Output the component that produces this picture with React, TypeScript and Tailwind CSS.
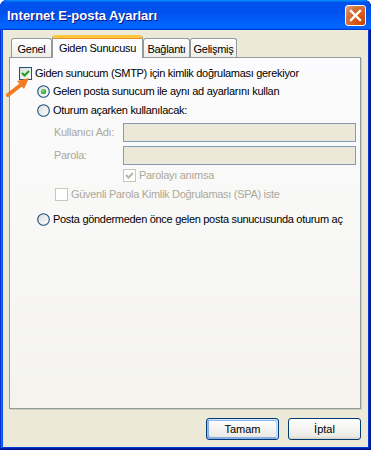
import React from "react";

const F = { fontFamily: '"Liberation Sans", Arial, sans-serif' };

function Check({ checked, disabled }: { checked?: boolean; disabled?: boolean }) {
  return (
    <div
      className={
        "w-[13px] h-[13px] shrink-0 border flex items-center justify-center " +
        (disabled
          ? "border-[#cac8bb] bg-white"
          : "border-[#1c5180] bg-[linear-gradient(135deg,#dcdcd7,#ffffff)]")
      }
    >
      {checked && (
        <svg width="11" height="11" viewBox="0 0 11 11">
          <polyline
            points="2,5 4.5,7.5 9,3"
            fill="none"
            stroke={disabled ? "#b8b6a8" : "#21a121"}
            strokeWidth="2.2"
          />
        </svg>
      )}
    </div>
  );
}

function Radio({ checked }: { checked?: boolean }) {
  return (
    <svg width="13" height="13" viewBox="0 0 13 13" className="shrink-0">
      <defs>
        <linearGradient id="rg" x1="0" y1="0" x2="1" y2="1">
          <stop offset="0" stopColor="#dcdcd7" />
          <stop offset="1" stopColor="#ffffff" />
        </linearGradient>
        <radialGradient id="dot" cx="0.4" cy="0.4" r="0.6">
          <stop offset="0" stopColor="#8ee08e" />
          <stop offset="1" stopColor="#1f9c1f" />
        </radialGradient>
      </defs>
      <circle cx="6.5" cy="6.5" r="5.8" fill="url(#rg)" stroke="#1c5180" strokeWidth="1.1" />
      {checked && <circle cx="6.5" cy="6.5" r="2.6" fill="url(#dot)" />}
    </svg>
  );
}

function Tab({ label, active, w }: { label: string; active?: boolean; w: string }) {
  if (active)
    return (
      <div className={"relative z-10 -mb-px h-[23px] pt-[4px] text-center border-x border-[#919b9c] border-t-[3px] border-t-[#ffc83c] rounded-t-[3px] shadow-[inset_0_1px_#e68b2c] bg-[#fcfcfe] text-[11px] leading-[13px] tracking-[-0.3px] text-black " + w}>
        {label}
      </div>
    );
  return (
    <div className={"h-[19px] pt-[4px] text-center border-x border-t border-[#919b9c] rounded-t-[3px] bg-[linear-gradient(180deg,#ffffff,#fafaf9_26%,#f0f0ea_95%,#ecebe6)] text-[11px] leading-[13px] tracking-[-0.3px] text-black " + w}>
      {label}
    </div>
  );
}

export default function App() {
  return (
    <div className="w-[371px] h-[450px] bg-white" style={F}>
      <div className="relative w-[371px] h-[450px] flex flex-col rounded-t-[7px] bg-[#0831d9] shadow-[inset_-1px_-1px_#00138c,inset_1px_1px_#0831d9,inset_-2px_-2px_#001ea0,inset_2px_2px_#166aee,inset_-3px_-3px_#003bda,inset_3px_3px_#0855dd] overflow-hidden">
        {/* title bar */}
        <div className="h-[30px] shrink-0 flex items-center justify-between pl-[7px] pr-[5px] rounded-t-[7px] bg-[linear-gradient(180deg,#0997ff,#0053ee_8%,#0050ee_40%,#0066ff_88%,#0066ff_93%,#005bff_95%,#003dd7_96%,#003dd7)]">
          <span className="text-white font-bold text-[13px] leading-none [text-shadow:1px_1px_#0f1089]">
            Internet E-posta Ayarları
          </span>
          <div className="w-[21px] h-[21px] rounded-[3px] border border-white bg-[radial-gradient(circle_at_90%_90%,#cc4600_0%,#dc6527_55%,#cd7546_70%,#ee9f85_100%)] flex items-center justify-center">
            <svg width="13" height="13" viewBox="0 0 13 13">
              <path d="M2 2 L11 11 M11 2 L2 11" stroke="white" strokeWidth="2.4" strokeLinecap="square" />
            </svg>
          </div>
        </div>
        {/* body */}
        <div className="flex-1 mx-[3px] mb-[3px] bg-[#ece9d8] flex flex-col px-[6px] pt-[5px]">
          <div className="flex items-end h-[22px] pl-[2px]">
            <Tab label="Genel" w="w-[41px]" />
            <Tab label="Giden Sunucusu" active w="w-[91px]" />
            <Tab label="Bağlantı" w="w-[47px]" />
            <Tab label="Gelişmiş" w="w-[47px]" />
          </div>
          <div className="w-[352px] h-[352px] border border-[#919b9c] shadow-[1px_1px_#d0cebf] bg-[linear-gradient(180deg,#fcfcfe,#f4f3ee)] flex flex-col pt-[6px] text-[11px] tracking-[-0.3px] text-black">
            <div className="h-[18px] flex items-center pl-[9px] gap-[3px]">
              <Check checked />
              <span>Giden sunucum (SMTP) için kimlik doğrulaması gerekiyor</span>
            </div>
            <div className="h-[18px] flex items-center pl-[27px] gap-[3px]">
              <Radio checked />
              <span>Gelen posta sunucum ile aynı ad ayarlarını kullan</span>
            </div>
            <div className="mt-[1px] h-[18px] flex items-center pl-[27px] gap-[3px]">
              <Radio />
              <span>Oturum açarken kullanılacak:</span>
            </div>
            <div className="mt-[4px] h-[19px] flex items-center pl-[44px] pr-[4px]">
              <span className="w-[69px] text-[#aca899]">Kullanıcı Adı:</span>
              <div className="flex-1 h-[19px] border border-[#7f9db9] bg-[#ece9d8]" />
            </div>
            <div className="mt-[4px] h-[19px] flex items-center pl-[44px] pr-[4px]">
              <span className="w-[69px] text-[#aca899]">Parola:</span>
              <div className="flex-1 h-[19px] border border-[#7f9db9] bg-[#ece9d8]" />
            </div>
            <div className="mt-[1px] h-[18px] flex items-center pl-[113px] gap-[3px]">
              <Check checked disabled />
              <span className="text-[#aca899]">Parolayı anımsa</span>
            </div>
            <div className="mt-[1px] h-[18px] flex items-center pl-[45px] gap-[3px]">
              <Check disabled />
              <span className="text-[#aca899]">Güvenli Parola Kimlik Doğrulaması (SPA) iste</span>
            </div>
            <div className="mt-[7px] h-[18px] flex items-center pl-[27px] gap-[3px] whitespace-nowrap">
              <Radio />
              <span>Posta göndermeden önce gelen posta sunucusunda oturum aç</span>
            </div>
          </div>
          <div className="flex justify-end gap-[9px] mt-[9px] pr-[1px] text-[11px]">
            <button className="w-[73px] h-[22px] rounded-[3px] border border-[#003c74] bg-[linear-gradient(180deg,#ffffff,#ecebe6_86%,#d6d0c5)] shadow-[inset_-1px_1px_#cee7ff,inset_1px_2px_#98b8ea,inset_-2px_2px_#bcd4f6,inset_1px_-1px_#89ade4,inset_2px_-2px_#89ade4] text-black">
              Tamam
            </button>
            <button className="w-[73px] h-[22px] rounded-[3px] border border-[#003c74] bg-[linear-gradient(180deg,#ffffff,#ecebe6_86%,#d6d0c5)] text-black">
              İptal
            </button>
          </div>
        </div>
        {/* orange annotation arrow */}
        <svg className="absolute left-0 top-[72px]" width="34" height="28" viewBox="0 0 34 28">
          <path d="M8 23 L22 12" stroke="#f47b20" strokeWidth="4" strokeLinecap="round" fill="none" />
          <path d="M29 6 L17 9 L24 17 Z" fill="#f47b20" />
        </svg>
      </div>
    </div>
  );
}
